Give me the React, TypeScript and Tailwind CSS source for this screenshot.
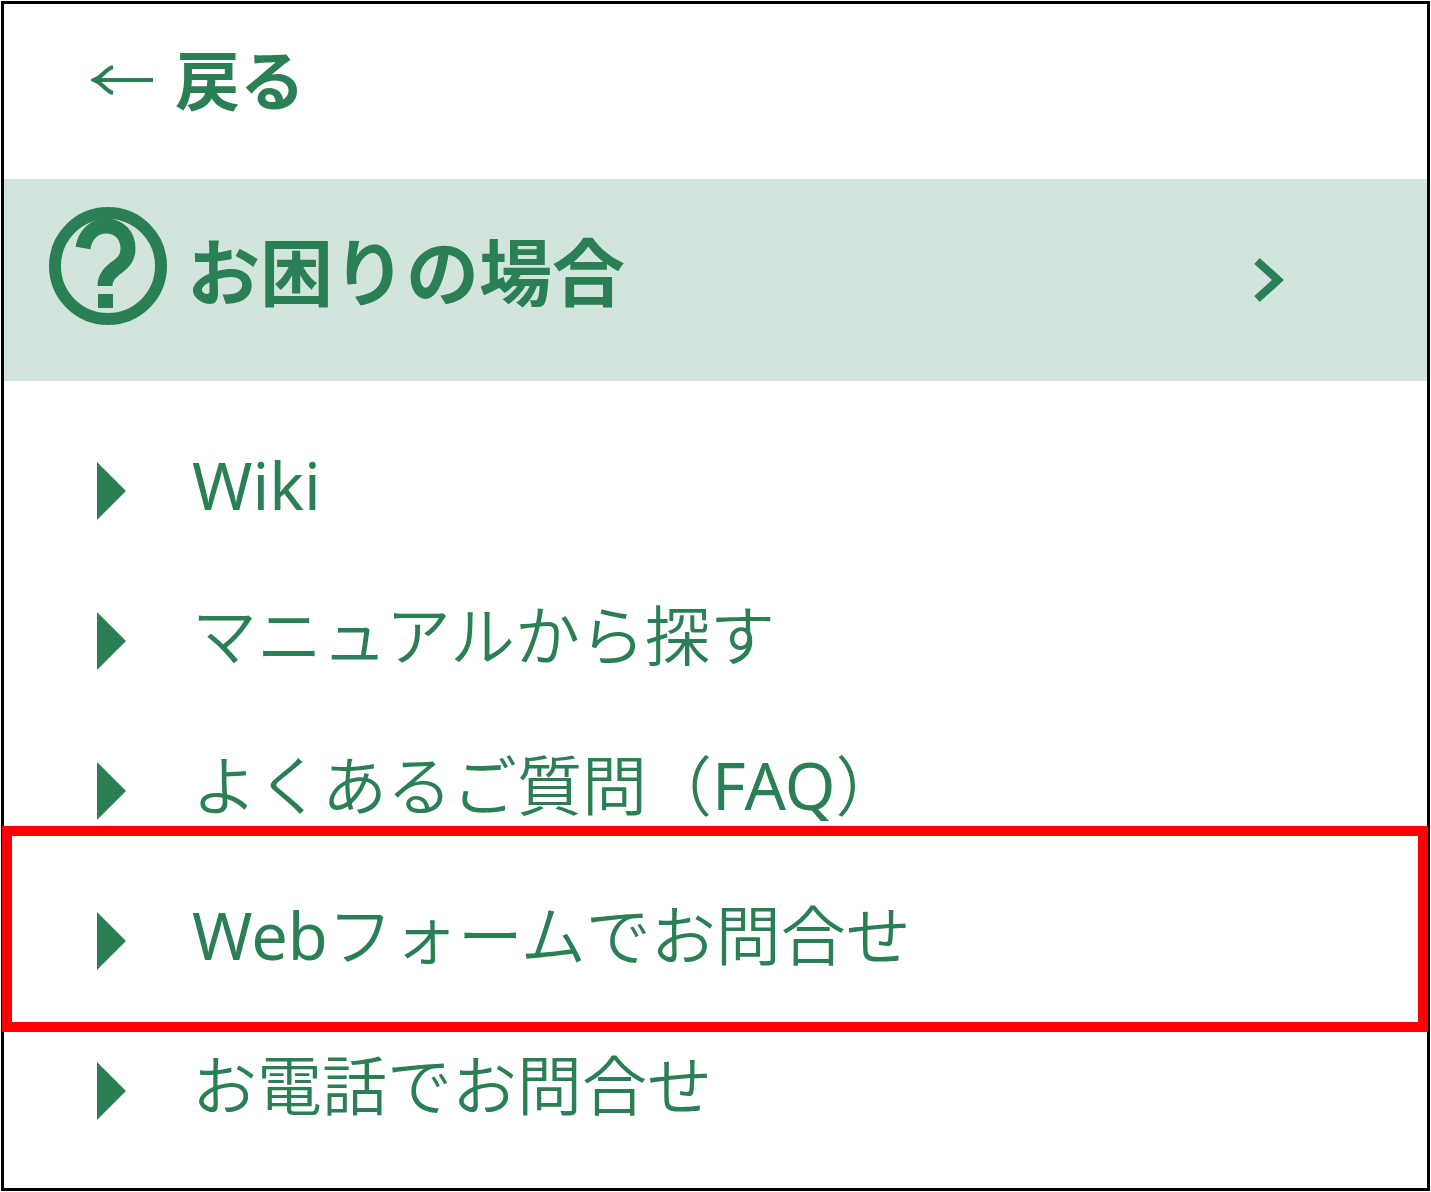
import { FC } from 'react';

interface MenuItem {
  label: string;
  href: string;
  highlighted?: boolean;
}

const menuItems: MenuItem[] = [
  { label: 'Wiki', href: '#wiki' },
  { label: 'マニュアルから探す', href: '#manual' },
  { label: 'よくあるご質問（FAQ）', href: '#faq' },
  { label: 'Webフォームでお問合せ', href: '#web-form', highlighted: true },
  { label: 'お電話でお問合せ', href: '#phone' },
];

const BackArrow: FC = () => (
  <svg width="64" height="32" viewBox="0 0 64 32" fill="none" aria-hidden="true">
    <path
      d="M3 16H62M22 3C18 4 15 7 12 10C9 13 6 15 3 16C6 17 9 19 12 22C15 25 18 28 22 29"
      stroke="currentColor"
      strokeWidth="4"
    />
  </svg>
);

const QuestionIcon: FC = () => (
  <svg
    className="shrink-0"
    width="118"
    height="118"
    viewBox="0 0 118 118"
    fill="none"
    aria-hidden="true"
  >
    <circle cx="59" cy="59" r="53" stroke="currentColor" strokeWidth="12" />
    <path
      d="M34 41C36 28 45 19 57 19C70 19 79 28 79 42C79 61 56 60 56 79"
      stroke="currentColor"
      strokeWidth="15"
    />
    <path d="M49 87H64V101H49Z" fill="currentColor" />
  </svg>
);

const Chevron: FC = () => (
  <svg width="32" height="44" viewBox="0 0 32 44" fill="none" aria-hidden="true">
    <path d="M4 3L25 22L4 41" stroke="currentColor" strokeWidth="8" />
  </svg>
);

const Triangle: FC = () => (
  <svg
    className="shrink-0"
    width="29"
    height="58"
    viewBox="0 0 29 58"
    fill="currentColor"
    aria-hidden="true"
  >
    <path d="M0 0L29 29L0 58Z" />
  </svg>
);

const MenuRow: FC<{ item: MenuItem }> = ({ item }) => (
  <li className="relative">
    <a href={item.href} className="flex h-[150px] items-center gap-[66px] pl-[93px]">
      <Triangle />
      <span className="whitespace-nowrap pb-3 text-[65px] leading-[80px] font-normal">
        {item.label}
      </span>
    </a>
    {item.highlighted && (
      <div className="pointer-events-none absolute -left-0.5 -right-px -top-10 -bottom-4 border-10 border-[#ff0000]" />
    )}
  </li>
);

function App() {
  return (
    <div className="flex min-h-screen bg-white p-px font-['Noto_Sans','Noto_Sans_CJK_JP',sans-serif] text-[#2a7f54]">
      <nav className="flex-1 border-3 border-black pb-5">
        <a href="#back" className="flex h-[175px] items-center gap-5 pb-6 pl-[87px]">
          <BackArrow />
          <span className="text-[65px] leading-[80px] font-bold">戻る</span>
        </a>

        <button
          type="button"
          className="flex h-[202px] w-full items-center bg-[#d2e5dc] pr-[142px] pb-7 pl-[45px] text-left"
        >
          <QuestionIcon />
          <span className="ml-5 flex-1 pt-3 text-[73px] leading-[88px] font-bold">
            お困りの場合
          </span>
          <span className="pt-7">
            <Chevron />
          </span>
        </button>

        <ul className="pt-[35px] font-['Noto_Sans','Noto_Sans_CJK_JP_DemiLight','Noto_Sans_CJK_JP',sans-serif]">
          {menuItems.map((item) => (
            <MenuRow key={item.href} item={item} />
          ))}
        </ul>
      </nav>
    </div>
  );
}

export default App;
